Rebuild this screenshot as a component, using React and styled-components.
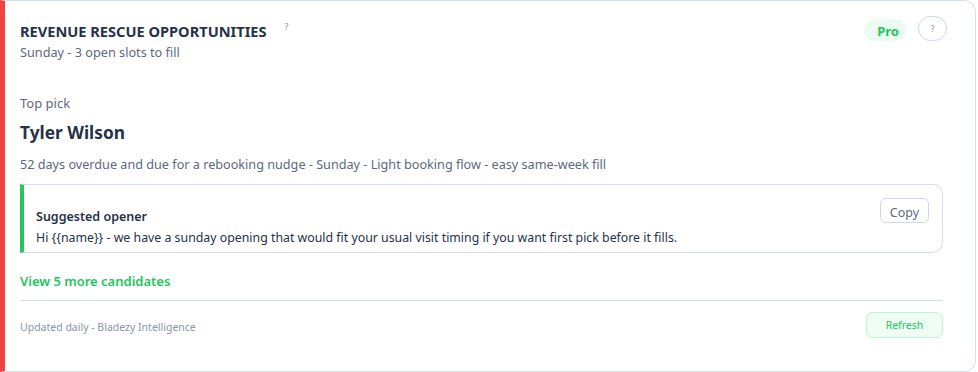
import React from "react";
import styled, { createGlobalStyle } from "styled-components";

const Global = createGlobalStyle`
  html, body { margin: 0; padding: 0; background: #ffffff; }
  body { font-family: "Noto Sans", "Open Sans", sans-serif; }
  * { box-sizing: border-box; }
`;

const Card = styled.section`
  width: 976px;
  height: 372px;
  background: #fff;
  border: 1px solid #d6e0eb;
  border-left: 5px solid #ef4444;
  border-radius: 0 12px 12px 0;
  padding: 14px 28px 0 15px;
  display: flex;
  flex-direction: column;
`;

const Header = styled.div`
  display: flex;
  justify-content: space-between;
  align-items: flex-start;
`;

const TitleRow = styled.div`
  display: flex;
  align-items: flex-start;
  gap: 18px;
  padding-top: 7px;
`;

const Title = styled.h2`
  margin: 0;
  font-size: 14.6px;
  font-weight: 700;
  color: #253249;
  line-height: 18px;
`;

const TinyQ = styled.span`
  font-size: 9px;
  color: #8a95a8;
  line-height: 10px;
`;

const Sub = styled.div`
  font-size: 12.7px;
  color: #5b6a80;
  margin-top: 4px;
  line-height: 17px;
`;

const Actions = styled.div`
  display: flex;
  align-items: center;
  gap: 12px;
`;

const ProBadge = styled.span`
  background: #ecfbf1;
  color: #22c55e;
  font-weight: 700;
  font-size: 13px;
  border-radius: 12px;
  padding: 3px 7px 1px 13px;
  line-height: 18px;
  margin-top: 4px;
`;

const HelpBtn = styled.button`
  width: 29px;
  height: 25px;
  border: 1px solid #cdd8e6;
  border-radius: 13px;
  background: #fff;
  color: #8a95a8;
  font-size: 9px;
  font-family: inherit;
  padding: 0;
`;

const Label = styled.div`
  margin-top: 34px;
  font-size: 13px;
  color: #5b6a80;
  line-height: 16px;
`;

const Name = styled.div`
  margin-top: 11px;
  font-size: 17.3px;
  font-weight: 700;
  color: #253249;
  line-height: 22px;
`;

const Desc = styled.div`
  margin-top: 12px;
  font-size: 12.65px;
  color: #5b6a80;
  line-height: 16px;
`;

const Opener = styled.div`
  margin-top: 12px;
  width: 923px;
  height: 69px;
  border: 1px solid #d4dfea;
  border-left: 4px solid #22c55e;
  border-radius: 0 10px 10px 0;
  padding: 13px 13px 0 12px;
  display: flex;
  justify-content: space-between;
  align-items: flex-start;
`;

const OpenerText = styled.div`
  padding-top: 11px;
`;

const OpenerTitle = styled.div`
  font-size: 12.5px;
  font-weight: 600;
  color: #253249;
  line-height: 16px;
`;

const OpenerBody = styled.div`
  margin-top: 5px;
  font-size: 12.33px;
  color: #253249;
  line-height: 16px;
`;

const CopyBtn = styled.button`
  width: 49px;
  height: 25px;
  border: 1px solid #cdd8e6;
  border-radius: 6px;
  background: #fff;
  color: #5b6a80;
  font-family: inherit;
  font-size: 12.5px;
  padding: 4px 0 0;
`;

const MoreLink = styled.a`
  margin-top: 19px;
  font-size: 13px;
  font-weight: 600;
  color: #22c55e;
  line-height: 18px;
  text-decoration: none;
`;

const Divider = styled.hr`
  margin: 10px 0 0;
  width: 923px;
  border: none;
  border-top: 1px solid #d4dfea;
`;

const Footer = styled.div`
  width: 923px;
  margin-top: 11px;
  display: flex;
  justify-content: space-between;
  align-items: center;
`;

const FooterText = styled.span`
  font-size: 10.5px;
  color: #8a95a8;
  padding-top: 3px;
`;

const RefreshBtn = styled.button`
  width: 77px;
  height: 26px;
  background: #f0fdf4;
  border: 1px solid #bbf7d0;
  border-radius: 6px;
  color: #22c55e;
  font-family: inherit;
  font-size: 10.5px;
  padding: 0;
`;

export default function App() {
  return (
    <>
      <Global />
      <Card>
        <Header>
          <div>
            <TitleRow>
              <Title>REVENUE RESCUE OPPORTUNITIES</Title>
              <TinyQ>?</TinyQ>
            </TitleRow>
            <Sub>Sunday - 3 open slots to fill</Sub>
          </div>
          <Actions>
            <ProBadge>Pro</ProBadge>
            <HelpBtn>?</HelpBtn>
          </Actions>
        </Header>
        <Label>Top pick</Label>
        <Name>Tyler Wilson</Name>
        <Desc>52 days overdue and due for a rebooking nudge - Sunday - Light booking flow - easy same-week fill</Desc>
        <Opener>
          <OpenerText>
            <OpenerTitle>Suggested opener</OpenerTitle>
            <OpenerBody>Hi {"{{name}}"} - we have a sunday opening that would fit your usual visit timing if you want first pick before it fills.</OpenerBody>
          </OpenerText>
          <CopyBtn>Copy</CopyBtn>
        </Opener>
        <MoreLink>View 5 more candidates</MoreLink>
        <Divider />
        <Footer>
          <FooterText>Updated daily - Bladezy Intelligence</FooterText>
          <RefreshBtn>Refresh</RefreshBtn>
        </Footer>
      </Card>
    </>
  );
}
